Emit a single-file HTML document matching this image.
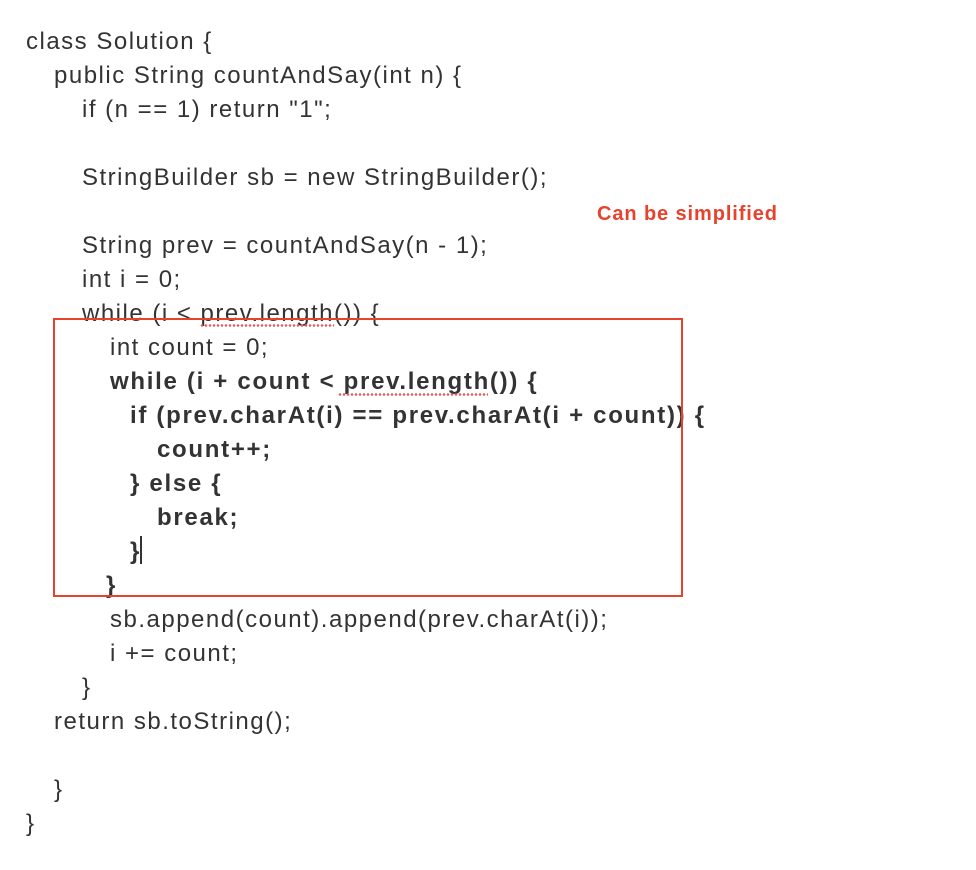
<!DOCTYPE html>
<html><head><meta charset="utf-8"><style>
html,body{margin:0;padding:0;background:#fff;}
body{width:976px;height:870px;position:relative;overflow:hidden;font-family:"Liberation Sans",Arial,sans-serif;color:#333;}
.l{position:absolute;font-size:24px;letter-spacing:1.5px;line-height:34px;white-space:pre;height:34px;margin-top:2px;}
.b{font-weight:bold;letter-spacing:1.7px;}
.box{position:absolute;left:53px;top:318px;width:626px;height:275px;border:2px solid #e5432d;}
.note{position:absolute;left:597px;top:203px;font-size:20px;letter-spacing:0.9px;font-weight:bold;color:#e5432d;}
.sq{position:absolute;height:3px;background-image:radial-gradient(circle,#e06060 1.2px,transparent 1.4px);background-size:4px 3px;}
.cur{position:absolute;left:140px;top:536px;width:1.5px;height:28px;background:#333;}
</style></head><body>
<div class="l" style="left:26px;top:23px">class Solution {</div>
<div class="l" style="left:54px;top:57px">public String countAndSay(int n) {</div>
<div class="l" style="left:82px;top:91px">if (n == 1) return "1";</div>
<div class="l" style="left:82px;top:159px">StringBuilder sb = new StringBuilder();</div>
<div class="note">Can be simplified</div>
<div class="l" style="left:82px;top:227px">String prev = countAndSay(n - 1);</div>
<div class="l" style="left:82px;top:261px">int i = 0;</div>
<div class="l" style="left:82px;top:295px">while (i &lt; prev.length()) {</div>
<div class="sq" style="left:200px;top:324px;width:134px"></div>
<div class="l" style="left:110px;top:329px">int count = 0;</div>
<div class="l b" style="left:110px;top:363px">while (i + count &lt; prev.length()) {</div>
<div class="sq" style="left:338px;top:393px;width:150px"></div>
<div class="l b" style="left:130px;top:397px">if (prev.charAt(i) == prev.charAt(i + count)) {</div>
<div class="l b" style="left:157px;top:431px">count++;</div>
<div class="l b" style="left:130px;top:465px">} else {</div>
<div class="l b" style="left:157px;top:499px">break;</div>
<div class="l b" style="left:130px;top:533px">}</div>
<div class="cur"></div>
<div class="l b" style="left:106px;top:567px">}</div>
<div class="box"></div>
<div class="l" style="left:110px;top:601px">sb.append(count).append(prev.charAt(i));</div>
<div class="l" style="left:110px;top:635px">i += count;</div>
<div class="l" style="left:82px;top:669px">}</div>
<div class="l" style="left:54px;top:703px">return sb.toString();</div>
<div class="l" style="left:54px;top:771px">}</div>
<div class="l" style="left:26px;top:805px">}</div>
</body></html>
